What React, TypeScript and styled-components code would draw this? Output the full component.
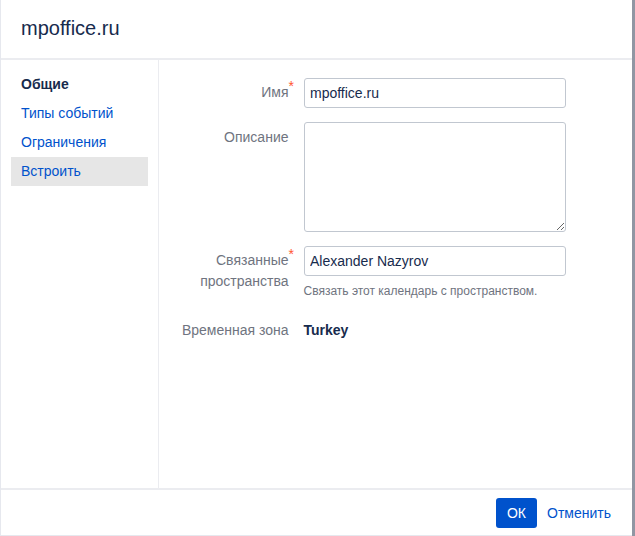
import React from "react";
import styled, { createGlobalStyle } from "styled-components";

const Global = createGlobalStyle`
  html, body { margin: 0; padding: 0; background: #9096a3; }
  body { font-family: "Liberation Sans", Arial, sans-serif; font-size: 14px; color: #172b4d; }
  * { box-sizing: border-box; }
`;

const Backdrop = styled.div`
  width: 635px;
  height: 536px;
  overflow: hidden;
  background: #9096a3;
`;

const Dialog = styled.div`
  width: 632px;
  height: 536px;
  background: #fff;
  border-left: 1px solid #e6e8ee;
  border-bottom: 1px solid #e6e8ee;
  display: flex;
  flex-direction: column;
`;

const Header = styled.header`
  height: 60px;
  flex: none;
  padding: 0 20px;
  display: flex;
  align-items: center;
  border-bottom: 2px solid #ebecf0;
`;

const Title = styled.h2`
  margin: 0 0 3px;
  font-size: 20px;
  font-weight: 400;
  line-height: 24px;
  color: #172b4d;
`;

const Body = styled.div`
  flex: 1;
  display: flex;
  min-height: 0;
`;

const Sidebar = styled.nav`
  width: 158px;
  flex: none;
  border-right: 1px solid #ebecf0;
  padding: 10px 10px 0;
`;

const NavItem = styled.div<{ $active?: boolean; $selected?: boolean }>`
  height: 29px;
  width: 137px;
  padding: 0 10px;
  line-height: 28px;
  font-size: 14px;
  font-weight: ${(p) => (p.$active ? 700 : 400)};
  color: ${(p) => (p.$active ? "#172b4d" : "#0052cc")};
  background: ${(p) => (p.$selected ? "#e6e6e6" : "transparent")};
`;

const Form = styled.div`
  flex: 1;
  padding: 18px 0 0;
  display: flex;
  flex-direction: column;
`;

const Row = styled.div<{ $gap: number }>`
  display: flex;
  margin-bottom: ${(p) => p.$gap}px;
`;

const Label = styled.label<{ $top?: number }>`
  width: 129.5px;
  flex: none;
  text-align: right;
  color: #6f7480;
  font-size: 14px;
  line-height: 21px;
  padding-top: ${(p) => p.$top ?? 4}px;
`;

const Star = styled.span`
  color: #ff5630;
  font-size: 14px;
  line-height: 0;
  position: absolute;
  margin-top: 4px;
`;

const Field = styled.div`
  margin-left: 15.5px;
  width: 262px;
`;

const TextInput = styled.input`
  display: block;
  width: 262px;
  height: 30px;
  border: 1px solid #c1c7d0;
  border-radius: 3px;
  padding: 0 5px;
  font: 14px "Liberation Sans", Arial, sans-serif;
  color: #172b4d;
  background: #fff;
  outline: none;
`;

const TextArea = styled.textarea`
  display: block;
  width: 262px;
  height: 110px;
  border: 1px solid #c1c7d0;
  border-radius: 3px;
  padding: 4px 5px;
  font: 14px "Liberation Sans", Arial, sans-serif;
  color: #172b4d;
  background: #fff;
  outline: none;
`;

const Hint = styled.div`
  margin: 7px 0 0 -0.5px;
  font-size: 12px;
  line-height: 16px;
  color: #6f7480;
`;

const Value = styled.div`
  margin-left: 15px;
  padding-top: 3px;
  font-size: 14px;
  line-height: 21px;
  font-weight: 700;
  color: #172b4d;
`;

const Footer = styled.footer`
  flex: none;
  height: 47px;
  border-top: 2px solid #ebecf0;
  display: flex;
  justify-content: flex-end;
  align-items: center;
  padding: 0 21px 0 0;
  gap: 10px;
`;

const Primary = styled.button`
  width: 41px;
  height: 30px;
  border: none;
  border-radius: 3px;
  background: #0052cc;
  color: #fff;
  font: 14px "Liberation Sans", Arial, sans-serif;
  padding: 0;
`;

const LinkButton = styled.button`
  border: none;
  background: none;
  padding: 0;
  color: #0052cc;
  font: 14px "Liberation Sans", Arial, sans-serif;
`;

export default function App() {
  return (
    <Backdrop>
      <Global />
      <Dialog>
        <Header>
          <Title>mpoffice.ru</Title>
        </Header>
        <Body>
          <Sidebar>
            <NavItem $active>Общие</NavItem>
            <NavItem>Типы событий</NavItem>
            <NavItem>Ограничения</NavItem>
            <NavItem $selected>Встроить</NavItem>
          </Sidebar>
          <Form>
            <Row $gap={14}>
              <Label $top={4}>
                Имя<Star>*</Star>
              </Label>
              <Field>
                <TextInput defaultValue="mpoffice.ru" />
              </Field>
            </Row>
            <Row $gap={14}>
              <Label $top={5}>Описание</Label>
              <Field>
                <TextArea />
              </Field>
            </Row>
            <Row $gap={18}>
              <Label $top={4}>
                Связанные<Star>*</Star>
                <br />
                пространства
              </Label>
              <Field>
                <TextInput defaultValue="Alexander Nazyrov" />
                <Hint>Связать этот календарь с пространством.</Hint>
              </Field>
            </Row>
            <Row $gap={0}>
              <Label $top={3}>Временная зона</Label>
              <Value>Turkey</Value>
            </Row>
          </Form>
        </Body>
        <Footer>
          <Primary>ОК</Primary>
          <LinkButton>Отменить</LinkButton>
        </Footer>
      </Dialog>
    </Backdrop>
  );
}
